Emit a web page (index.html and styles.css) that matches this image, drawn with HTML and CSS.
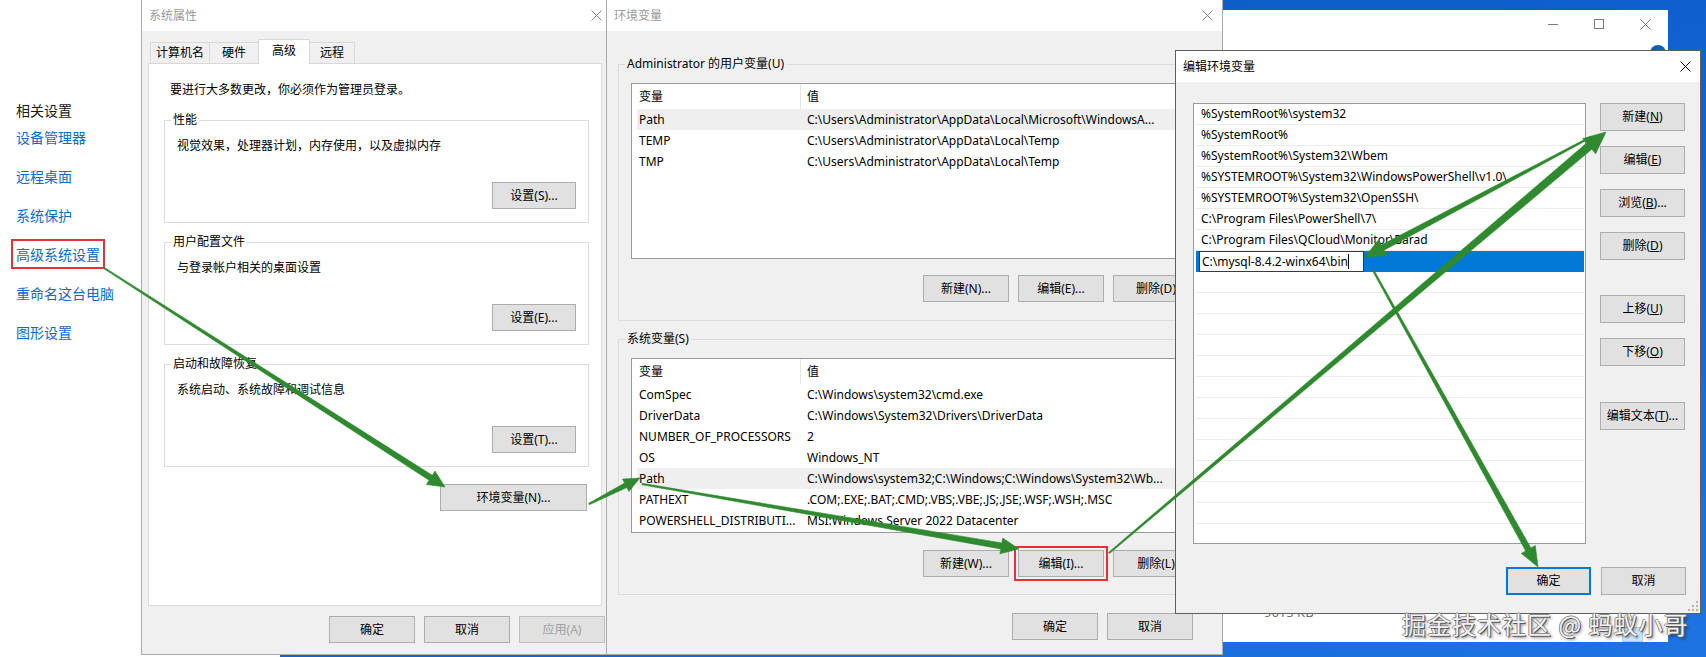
FILE: index.html
```html
<!DOCTYPE html>
<html lang="zh-CN">
<head>
<meta charset="utf-8">
<title>环境变量</title>
<link rel="stylesheet" href="styles.css">
</head>
<body>
<div class="desk">
  <aside class="settings">
    <div class="rel-title">相关设置</div>
    <a class="rel-link">设备管理器</a>
    <a class="rel-link">远程桌面</a>
    <a class="rel-link">系统保护</a>
    <a class="rel-link marked">高级系统设置</a>
    <a class="rel-link">重命名这台电脑</a>
    <a class="rel-link">图形设置</a>
  </aside>

  <section class="taskwin">
    <div class="tw-ctrls">
      <span class="tw-c"><svg width="10" height="10" viewBox="0 0 10 10"><path d="M0 5.5h10" stroke="#7a7a7a" stroke-width="1"/></svg></span>
      <span class="tw-c"><svg width="10" height="10" viewBox="0 0 10 10"><rect x=".5" y=".5" width="9" height="9" fill="none" stroke="#7a7a7a" stroke-width="1"/></svg></span>
      <span class="tw-c"><svg width="11" height="11" viewBox="0 0 11 11"><path d="M.5.5l10 10M10.5.5l-10 10" stroke="#7a7a7a" stroke-width="1" fill="none"/></svg></span>
    </div>
    <div class="tw-badge-row"><span class="tw-badge"></span></div>
    <div class="tw-foot">
      <div class="tw-kb">9615 KB</div>
      <div class="tw-sel"></div>
    </div>
  </section>

  <section class="win sysprop">
    <header class="titlebar"><span class="title">系统属性</span><svg class="xicon" viewBox="0 0 11 11"><path d="M.5.5l10 10M10.5.5l-10 10" stroke="#8a8a8a" stroke-width="1" fill="none"/></svg></header>
    <div class="sp-body">
      <div class="tabs">
        <div class="tab t1">计算机名</div>
        <div class="tab t2">硬件</div>
        <div class="tab t3 active">高级</div>
        <div class="tab t4">远程</div>
      </div>
      <div class="panel">
        <p class="intro">要进行大多数更改，你必须作为管理员登录。</p>
        <div class="grp">
          <div class="grp-label">性能</div>
          <div class="grp-text">视觉效果，处理器计划，内存使用，以及虚拟内存</div>
          <div class="grp-btns"><button class="btn w84">设置(S)...</button></div>
        </div>
        <div class="grp">
          <div class="grp-label">用户配置文件</div>
          <div class="grp-text">与登录帐户相关的桌面设置</div>
          <div class="grp-btns"><button class="btn w84">设置(E)...</button></div>
        </div>
        <div class="grp">
          <div class="grp-label">启动和故障恢复</div>
          <div class="grp-text">系统启动、系统故障和调试信息</div>
          <div class="grp-btns"><button class="btn w84">设置(T)...</button></div>
        </div>
        <div class="env-row"><button class="btn w147">环境变量(N)...</button></div>
      </div>
      <div class="dlg-btns sp-btns">
        <button class="btn">确定</button>
        <button class="btn">取消</button>
        <button class="btn disabled">应用(A)</button>
      </div>
    </div>
  </section>

  <section class="win envvars">
    <header class="titlebar"><span class="title">环境变量</span><svg class="xicon" viewBox="0 0 11 11"><path d="M.5.5l10 10M10.5.5l-10 10" stroke="#8a8a8a" stroke-width="1" fill="none"/></svg></header>
    <div class="ev-body">
      <div class="ev-grp g1">
        <div class="grp-label">Administrator 的用户变量(U)</div>
        <div class="lv">
          <div class="lv-head"><span>变量</span><span>值</span></div>
          <div class="lv-row hl"><span>Path</span><span>C:\Users\Administrator\AppData\Local\Microsoft\WindowsA...</span></div>
          <div class="lv-row"><span>TEMP</span><span>C:\Users\Administrator\AppData\Local\Temp</span></div>
          <div class="lv-row"><span>TMP</span><span>C:\Users\Administrator\AppData\Local\Temp</span></div>
        </div>
        <div class="ev-btns">
          <button class="btn">新建(N)...</button>
          <button class="btn">编辑(E)...</button>
          <button class="btn">删除(D)</button>
        </div>
      </div>
      <div class="ev-grp g2">
        <div class="grp-label">系统变量(S)</div>
        <div class="lv">
          <div class="lv-head"><span>变量</span><span>值</span></div>
          <div class="lv-row"><span>ComSpec</span><span>C:\Windows\system32\cmd.exe</span></div>
          <div class="lv-row"><span>DriverData</span><span>C:\Windows\System32\Drivers\DriverData</span></div>
          <div class="lv-row"><span>NUMBER_OF_PROCESSORS</span><span>2</span></div>
          <div class="lv-row"><span>OS</span><span>Windows_NT</span></div>
          <div class="lv-row hl"><span>Path</span><span>C:\Windows\system32;C:\Windows;C:\Windows\System32\Wb...</span></div>
          <div class="lv-row"><span>PATHEXT</span><span>.COM;.EXE;.BAT;.CMD;.VBS;.VBE;.JS;.JSE;.WSF;.WSH;.MSC</span></div>
          <div class="lv-row"><span>POWERSHELL_DISTRIBUTI...</span><span>MSI:Windows Server 2022 Datacenter</span></div>
        </div>
        <div class="ev-btns">
          <button class="btn">新建(W)...</button>
          <button class="btn marked">编辑(I)...</button>
          <button class="btn">删除(L)</button>
        </div>
      </div>
      <div class="dlg-btns ev-foot">
        <button class="btn">确定</button>
        <button class="btn">取消</button>
      </div>
    </div>
  </section>

  <section class="win editenv">
    <header class="titlebar"><span class="title">编辑环境变量</span><svg class="xicon" viewBox="0 0 11 11"><path d="M.5.5l10 10M10.5.5l-10 10" stroke="#000" stroke-width="1" fill="none"/></svg></header>
    <div class="ee-body">
      <div class="el">
        <div class="el-row">%SystemRoot%\system32</div>
        <div class="el-row">%SystemRoot%</div>
        <div class="el-row">%SystemRoot%\System32\Wbem</div>
        <div class="el-row">%SYSTEMROOT%\System32\WindowsPowerShell\v1.0\</div>
        <div class="el-row">%SYSTEMROOT%\System32\OpenSSH\</div>
        <div class="el-row">C:\Program Files\PowerShell\7\</div>
        <div class="el-row">C:\Program Files\QCloud\Monitor\Barad</div>
        <div class="el-row sel"><span class="el-edit">C:\mysql-8.4.2-winx64\bin<span class="caret"></span></span></div>
        <div class="el-row"></div><div class="el-row"></div><div class="el-row"></div>
        <div class="el-row"></div><div class="el-row"></div><div class="el-row"></div>
        <div class="el-row"></div><div class="el-row"></div><div class="el-row"></div>
        <div class="el-row"></div><div class="el-row"></div><div class="el-row"></div>
        <div class="el-row"></div>
      </div>
      <div class="ee-side">
        <button class="btn">新建(<u>N</u>)</button>
        <button class="btn">编辑(<u>E</u>)</button>
        <button class="btn">浏览(<u>B</u>)...</button>
        <button class="btn">删除(<u>D</u>)</button>
        <button class="btn gap">上移(<u>U</u>)</button>
        <button class="btn">下移(<u>O</u>)</button>
        <button class="btn gap2">编辑文本(<u>T</u>)...</button>
      </div>
    </div>
    <div class="dlg-btns ee-foot">
      <button class="btn default">确定</button>
      <button class="btn">取消</button>
    </div>
    <svg class="grip" viewBox="0 0 10 10"><g fill="#b5b5b5"><rect x="8" y="0" width="2" height="2"/><rect x="4" y="4" width="2" height="2"/><rect x="8" y="4" width="2" height="2"/><rect x="0" y="8" width="2" height="2"/><rect x="4" y="8" width="2" height="2"/><rect x="8" y="8" width="2" height="2"/></g></svg>
  </section>

  <svg class="arrows" viewBox="0 0 1706 657">
    <g fill="#2f8a2f" stroke="#2f8a2f" stroke-width="0.6" stroke-linejoin="round">
      <polygon points="103.6,268.6 429.1,480.3 426.4,484.5 445,487 435.0,471.1 432.3,475.3 104.4,267.4"/>
      <polygon points="589.3,504.7 626.9,487.5 628.9,491.5 640,478 622.5,479.1 624.6,483.1 588.7,503.3"/>
      <polygon points="641.9,484.7 1000.8,548.9 999.9,553.8 1019,549 1002.7,538.0 1001.8,542.9 642.1,483.3"/>
      <polygon points="1109.5,553.6 1591.8,149.3 1595.7,153.8 1606,132 1582.7,138.6 1586.6,143.1 1108.5,552.4"/>
      <polygon points="1590.6,136.3 1381.3,245.0 1378.5,239.7 1365,257 1386.9,255.5 1384.1,250.2 1591.4,137.7"/>
      <polygon points="1372.3,270.4 1525.7,551.0 1521.3,553.4 1538,567 1535.3,545.6 1530.9,548.0 1373.7,269.6"/>
    </g>
  </svg>

  <div class="watermark">掘金技术社区 @ 蚂蚁小哥</div>
</div>
</body>
</html>
```

FILE: styles.css
```css
* { box-sizing: border-box; margin: 0; padding: 0; }
html, body { width: 1706px; height: 657px; overflow: hidden; }
body {
  font-family: "Noto Sans", "Noto Sans CJK SC", sans-serif;
  font-size: 12px;
  line-height: 16px;
  color: #000;
  background: #0a58c4;
}
.desk {
  position: relative;
  width: 1706px;
  height: 657px;
  overflow: hidden;
  background: linear-gradient(160deg, #0b56c0 0%, #0f62d0 55%, #1c74e2 100%);
}

/* settings page on the left */
.settings {
  position: absolute;
  left: 0; top: 0;
  width: 280px; height: 657px;
  background: #fff;
  padding: 100px 0 0 16px;
  font-family: "Noto Sans CJK SC", sans-serif;
  font-size: 14px;
  line-height: 20px;
}
.rel-title { color: #1a1a1a; }
.rel-link { display: block; width: fit-content; color: #0b6bcb; text-decoration: none; margin-top: 19px; }
.rel-title + .rel-link { margin-top: 7px; }
.rel-link.marked { outline: 2px solid #e53333; outline-offset: 3px; }

/* background window */
.taskwin {
  position: absolute;
  left: 1222px; top: 10px;
  width: 446px; height: 632px;
  background: #fff;
  display: flex;
  flex-direction: column;
}
.tw-ctrls { display: flex; justify-content: flex-end; height: 28px; }
.tw-c { width: 46px; height: 28px; display: flex; align-items: center; justify-content: center; }
.tw-badge-row { display: flex; justify-content: flex-end; padding-right: 2px; margin-top: 7px; }
.tw-badge { width: 16px; height: 16px; border-radius: 50%; background: #0f5fb5; }
.tw-foot { margin-top: auto; height: 38px; }
.tw-kb { padding-left: 42px; color: #707070; font-size: 13px; line-height: 16px; }
.tw-sel { margin: 7px 0 0 400px; width: 21px; height: 15px; background: #cce8ff; border: 1px solid #99d1ff; }

/* dialogs */
.win { position: absolute; background: #f0f0f0; display: flex; flex-direction: column; }
.titlebar { flex: none; height: 31px; background: #fff; display: flex; align-items: center; padding: 0 9px 0 7px; }
.title { color: #9a9a9a; }
.xicon { margin-left: auto; width: 11px; height: 11px; }

.btn {
  font: inherit;
  color: #000;
  height: 27px;
  background: #e1e1e1;
  border: 1px solid #adadad;
  display: flex;
  align-items: center;
  justify-content: center;
  padding: 0;
  white-space: nowrap;
}
.btn u { text-decoration: underline; text-underline-offset: 1px; }
.btn.disabled { color: #a0a0a0; border-color: #bfbfbf; }
.btn.marked { outline: 2px solid #e53333; outline-offset: 2px; }
.btn.default { border: 2px solid #0078d7; }
.w84 { width: 84px; }
.w147 { width: 147px; }
.dlg-btns { display: flex; justify-content: flex-end; gap: 9px; }
.dlg-btns .btn { width: 86px; }

/* 系统属性 */
.sysprop {
  left: 141px; top: 0;
  width: 466px; height: 655px;
  border-left: 1px solid #ababab;
  border-bottom: 1px solid #ababab;
}
.sysprop .titlebar { padding-right: 5px; }
.sp-body { padding: 8px 0 0 6px; }
.tabs { display: flex; align-items: flex-end; height: 24px; margin-left: 2px; position: relative; z-index: 1; }
.tab {
  height: 21px;
  border: 1px solid #d9d9d9;
  border-bottom: none;
  background: #f0f0f0;
  display: flex;
  align-items: center;
  justify-content: center;
  margin-left: -1px;
}
.tab:first-child { margin-left: 0; }
.tab.active { height: 25px; margin-bottom: -1px; background: #fff; padding-bottom: 3px; }
.t1 { width: 60px; }
.t2 { width: 50px; }
.t3 { width: 52px; }
.t4 { width: 46px; }
.panel { width: 454px; height: 543px; background: #fff; border: 1px solid #d9d9d9; padding-top: 18px; }
.intro { margin-left: 21px; }
.grp { margin: 22px 0 0 15px; width: 425px; height: 103px; border: 1px solid #dcdcdc; }
.grp + .grp { margin-top: 19px; }
.grp-label { width: fit-content; margin: -9px 0 0 6px; padding: 0 2px; background: #fff; white-space: nowrap; }
.grp-text { margin: 10px 0 0 12px; }
.grp-btns { display: flex; justify-content: flex-end; margin: 28px 12px 0 0; }
.env-row { display: flex; justify-content: flex-end; margin: 17px 14px 0 0; }
.sp-btns { margin: 10px 2px 0 0; }

/* 环境变量 */
.envvars {
  left: 606px; top: 0;
  width: 617px; height: 655px;
  border: 1px solid #ababab;
  border-top: none;
}
.ev-body { padding: 0 11px; }
.ev-grp { border: 1px solid #dcdcdc; }
.ev-grp .grp-label { background: #f0f0f0; }
.ev-grp.g1 { margin-top: 33px; height: 257px; }
.ev-grp.g2 { margin-top: 18px; height: 256px; }
.lv {
  margin: 11px 11px 0 12px;
  height: 176px;
  background: #fff;
  border: 1px solid #9a9a9a;
  padding-left: 5px;
  overflow: hidden;
}
.g2 .lv { height: 175px; }
.lv-head, .lv-row { display: grid; grid-template-columns: 164px 1fr; white-space: nowrap; }
.lv-head > span { display: flex; align-items: center; height: 25px; overflow: hidden; }
.lv-head > span:first-child { padding-left: 2px; border-right: 1px solid #e5e5e5; }
.lv-head > span:last-child { padding-left: 6px; }
.lv-row { height: 21px; align-items: center; }
.lv-row > span { overflow: hidden; }
.lv-row > span:first-child { padding-left: 2px; }
.lv-row > span:last-child { padding-left: 6px; }
.lv-row.hl { background: #efefef; }
.ev-btns { display: flex; justify-content: flex-end; gap: 9px; margin: 16px 11px 0 0; }
.g2 .ev-btns { margin-top: 17px; }
.ev-btns .btn { width: 86px; }
.ev-foot { margin: 18px 18px 0 0; }

/* 编辑环境变量 */
.editenv {
  left: 1175px; top: 50px;
  width: 526px; height: 564px;
  border: 1px solid #5f5f5f;
}
.editenv .title { color: #000; }
.ee-body { display: flex; padding: 21px 14px 0 17px; }
.el {
  flex: none;
  width: 393px; height: 441px;
  background: #fff;
  border: 1px solid #9a9a9a;
  padding: 0 1px 0 2px;
  overflow: hidden;
}
.el-row {
  height: 21px;
  border-bottom: 1px solid #ececec;
  padding-left: 5px;
  line-height: 20px;
  white-space: nowrap;
}
.el-row.sel { background: #0078d7; padding-left: 3px; border-bottom-color: #0078d7; }
.el-edit {
  display: inline-flex;
  align-items: center;
  vertical-align: top;
  width: 165px; height: 21px;
  background: #fff;
  border: 1px solid #3a3a3a;
  padding-left: 2px;
  line-height: 19px;
}
.caret { display: inline-block; width: 1px; height: 15px; background: #000; }
.ee-side { flex: none; margin-left: 14px; width: 85px; display: flex; flex-direction: column; }
.ee-side .btn { width: 85px; height: 28px; margin-top: 15px; }
.ee-side .btn:first-child { margin-top: 0; }
.ee-side .btn.gap { margin-top: 35px; }
.ee-side .btn.gap2 { margin-top: 36px; }
.ee-foot { margin: 23px 14px 0 0; gap: 10px; }
.ee-foot .btn { width: 85px; height: 28px; }
.grip { position: absolute; right: 2px; bottom: 2px; width: 10px; height: 10px; }

/* overlays */
.arrows { position: absolute; left: 0; top: 0; width: 1706px; height: 657px; pointer-events: none; }
.watermark {
  position: absolute;
  left: 1402px; top: 609px;
  font-family: "Noto Sans CJK SC", sans-serif;
  font-size: 24px;
  line-height: 30px;
  letter-spacing: 1px;
  color: #f2f2f2;
  white-space: nowrap;
  text-shadow: 1px 1px 0 #5a5a5a, -1px 0 0 #8a8a8a, 0 -1px 0 #8a8a8a, 2px 2px 3px rgba(0,0,0,.5);
}
```
